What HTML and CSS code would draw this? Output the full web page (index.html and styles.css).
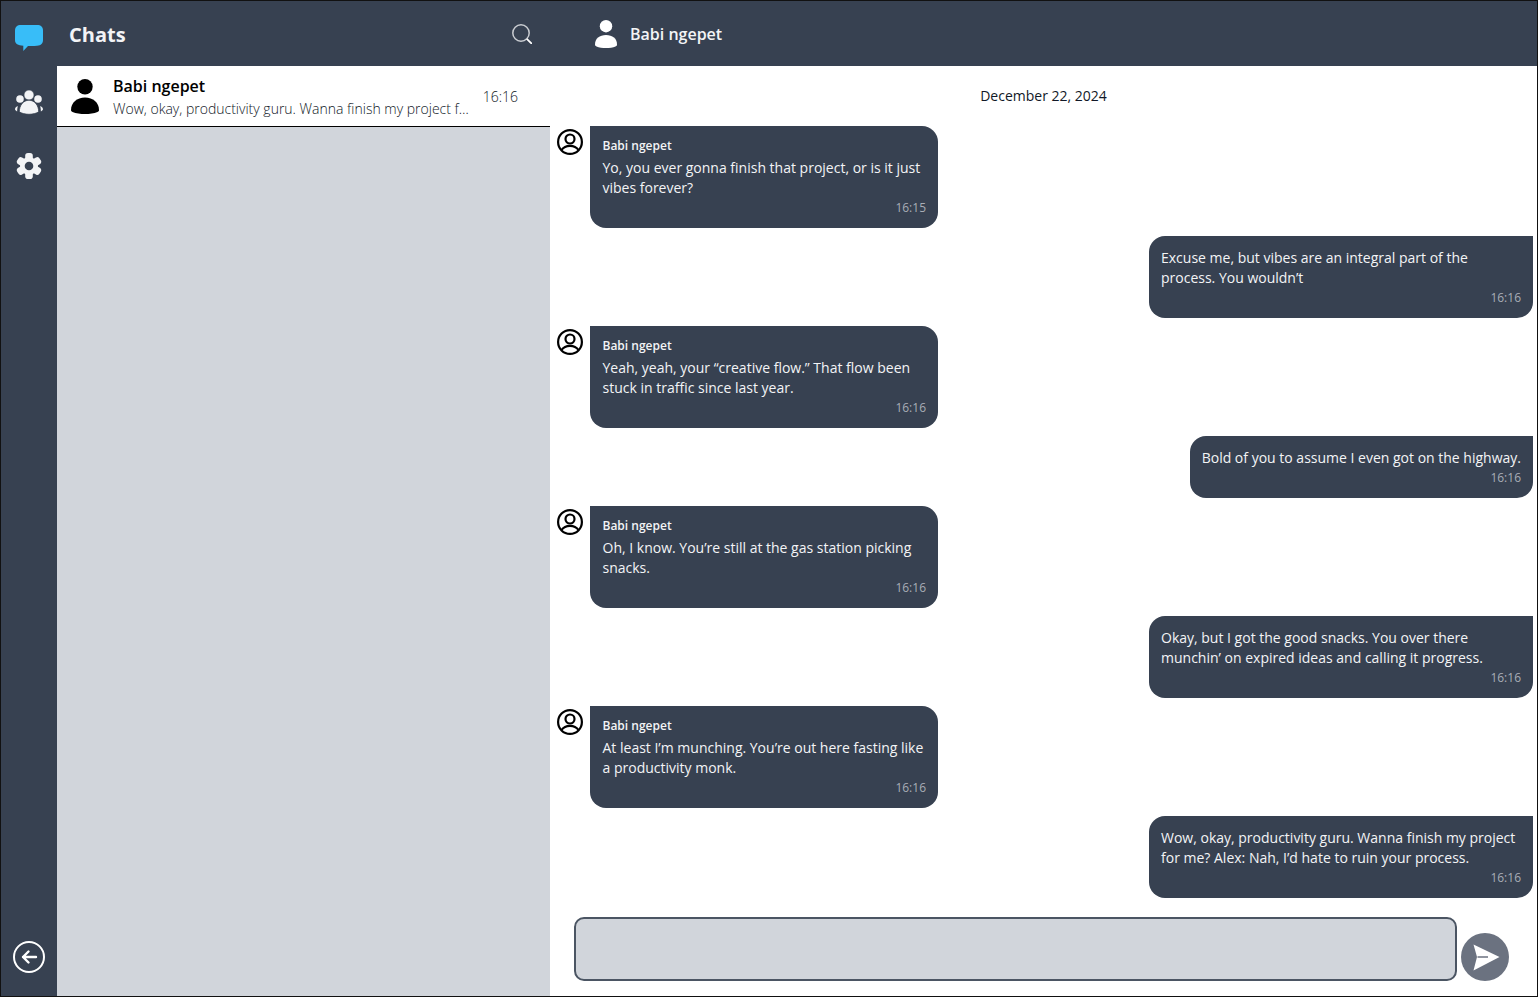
FILE: index.html
```html
<!DOCTYPE html>
<html lang="en">
<head>
  <meta charset="UTF-8">
  <meta name="viewport" content="width=device-width, initial-scale=1.0">
  <title>Chats</title>
  <link rel="stylesheet" href="styles.css">
</head>
<body>
  <div class="app">

    <nav class="sidebar">
      <svg class="nav-icon nav-chat" viewBox="0 0 28 26">
        <path fill="#38bdf8" d="M6 0h16c4 0 6 2 6 5.500v9.500c0 3.500-2 5.500-6 5.800-3 .3-6 .2-9 .2l-4.700 5V20.700C3 20.500 0 19 0 15V5.500C0 2 2 0 6 0z"/>
      </svg>
      <svg class="nav-icon nav-users" viewBox="0 0 28 26" fill="#f3f4f6">
        <circle cx="5" cy="10" r="3.800"/>
        <circle cx="23" cy="10" r="3.800"/>
        <circle cx="14" cy="6" r="5" stroke="#374151" stroke-width=".6"/>
        <path stroke="#374151" stroke-width=".8" d="M4.300 22.800c0-6.500 4.200-11.600 9.700-11.600s9.700 5.100 9.700 11.600c-2 1.500-5.800 2.500-9.700 2.500s-7.700-1-9.700-2.500z"/>
        <path d="M0 20.500c0-1.500.7-2.800 2.800-3.500-.4 1.800-.7 3.500-.7 5.500C1 22 .3 21.300 0 20.500z"/>
        <path d="M28 20.500c0-1.500-.7-2.800-2.800-3.500.4 1.800.7 3.500.7 5.500 1.100-.5 1.800-1.200 2.100-2z"/>
      </svg>
      <svg class="nav-icon nav-gear" viewBox="0 0 26 26">
        <g fill="#f3f4f6">
          <rect x="9.200" y="0" width="7.600" height="26" rx="2.800"/>
          <rect x="9.200" y="0" width="7.600" height="26" rx="2.800" transform="rotate(60 13 13)"/>
          <rect x="9.200" y="0" width="7.600" height="26" rx="2.800" transform="rotate(120 13 13)"/>
          <circle cx="13" cy="13" r="9"/>
        </g>
        <circle cx="13" cy="13" r="4.300" fill="#374151"/>
      </svg>
      <svg class="nav-icon nav-back" viewBox="0 0 32 32" fill="none" stroke="#fff" stroke-width="2" stroke-linecap="round" stroke-linejoin="round">
        <circle cx="16" cy="16" r="15"/>
        <path stroke-width="2.400" d="M23 16H10M15.500 10.500L10 16l5.500 5.500"/>
      </svg>
    </nav>

    <section class="list-panel">
      <header class="list-header">
        <h1>Chats</h1>
        <svg class="search-icon" viewBox="0 0 20 20" fill="none">
          <circle cx="9" cy="9" r="8.200" stroke="#c9ccd1" stroke-width="1.500"/>
          <path d="M14.800 14.800L20 20" stroke="#fff" stroke-width="1.800"/>
        </svg>
      </header>
      <div class="chat-item">
        <svg class="item-avatar" viewBox="0 0 28 35" fill="#000">
          <circle cx="14" cy="7.700" r="7.700"/>
          <path d="M0 31c0-7.500 6-12.500 14-12.500S28 23.500 28 31c0 1-.5 1.500-1.500 2-3.500 1.500-8 2-12.500 2s-9-.5-12.500-2C.5 32.500 0 32 0 31z"/>
        </svg>
        <div class="item-body">
          <div class="item-name">Babi ngepet</div>
          <div class="item-preview">Wow, okay, productivity guru. Wanna finish my project f…</div>
        </div>
        <div class="item-time">16:16</div>
      </div>
    </section>

    <main class="chat-panel">
      <header class="chat-header">
        <svg class="header-avatar" viewBox="0 0 22 28" fill="#fff">
          <circle cx="11" cy="6.200" r="6.200"/>
          <path d="M0 24.500c0-6 4.500-9.500 11-9.500s11 3.500 11 9.500c0 1-.5 1.500-1.500 2-2.500 1-6 1.500-9.500 1.500s-7-.5-9.500-1.500C.5 26 0 25.500 0 24.500z"/>
        </svg>
        <span>Babi ngepet</span>
      </header>

      <div class="messages">
        <div class="date">December 22, 2024</div>

        <div class="msg-in">
          <svg class="msg-avatar" viewBox="0 0 26 26" fill="none" stroke="#000" stroke-width="2.200">
            <circle cx="13" cy="13" r="11.900"/>
            <circle cx="13" cy="10" r="4.500"/>
            <path d="M4.500 21c2-3 5-4.200 8.500-4.200s6.500 1.200 8.500 4.200"/>
          </svg>
          <div class="bubble bubble-in">
            <div class="sender">Babi ngepet</div>
            <div class="text">Yo, you ever gonna finish that project, or is it just vibes forever?</div>
            <div class="time">16:15</div>
          </div>
        </div>

        <div class="bubble bubble-out">
          <div class="text">Excuse me, but vibes are an integral part of the process. You wouldn’t</div>
          <div class="time">16:16</div>
        </div>

        <div class="msg-in">
          <svg class="msg-avatar" viewBox="0 0 26 26" fill="none" stroke="#000" stroke-width="2.200">
            <circle cx="13" cy="13" r="11.900"/>
            <circle cx="13" cy="10" r="4.500"/>
            <path d="M4.500 21c2-3 5-4.200 8.500-4.200s6.500 1.200 8.500 4.200"/>
          </svg>
          <div class="bubble bubble-in">
            <div class="sender">Babi ngepet</div>
            <div class="text">Yeah, yeah, your “creative flow.” That flow been stuck in traffic since last year.</div>
            <div class="time">16:16</div>
          </div>
        </div>

        <div class="bubble bubble-out">
          <div class="text">Bold of you to assume I even got on the highway.</div>
          <div class="time">16:16</div>
        </div>

        <div class="msg-in">
          <svg class="msg-avatar" viewBox="0 0 26 26" fill="none" stroke="#000" stroke-width="2.200">
            <circle cx="13" cy="13" r="11.900"/>
            <circle cx="13" cy="10" r="4.500"/>
            <path d="M4.500 21c2-3 5-4.200 8.500-4.200s6.500 1.200 8.500 4.200"/>
          </svg>
          <div class="bubble bubble-in">
            <div class="sender">Babi ngepet</div>
            <div class="text">Oh, I know. You’re still at the gas station picking snacks.</div>
            <div class="time">16:16</div>
          </div>
        </div>

        <div class="bubble bubble-out">
          <div class="text">Okay, but I got the good snacks. You over there munchin’ on expired ideas and calling it progress.</div>
          <div class="time">16:16</div>
        </div>

        <div class="msg-in">
          <svg class="msg-avatar" viewBox="0 0 26 26" fill="none" stroke="#000" stroke-width="2.200">
            <circle cx="13" cy="13" r="11.900"/>
            <circle cx="13" cy="10" r="4.500"/>
            <path d="M4.500 21c2-3 5-4.200 8.500-4.200s6.500 1.200 8.500 4.200"/>
          </svg>
          <div class="bubble bubble-in">
            <div class="sender">Babi ngepet</div>
            <div class="text">At least I’m munching. You’re out here fasting like a productivity monk.</div>
            <div class="time">16:16</div>
          </div>
        </div>

        <div class="bubble bubble-out">
          <div class="text">Wow, okay, productivity guru. Wanna finish my project for me? Alex: Nah, I’d hate to ruin your process.</div>
          <div class="time">16:16</div>
        </div>
      </div>

      <div class="composer">
        <textarea class="composer-input"></textarea>
        <button class="send-btn" type="button">
          <svg viewBox="0 0 48 48">
            <path fill="#fff" d="M12.500 11.500L38.500 24 12.500 37.500 16 24z"/>
            <path d="M16.500 24H27" stroke="#6b7280" stroke-width="1.500"/>
          </svg>
        </button>
      </div>
    </main>

  </div>
</body>
</html>
```

FILE: styles.css
```css
* {
  box-sizing: border-box;
}

body {
  margin: 0;
  font-family: "Open Sans", sans-serif;
  background-color: #fff;
}

.app {
  display: flex;
  height: 997px;
  border: 1px solid #111;
  overflow: hidden;
}

.sidebar {
  width: 56px;
  flex-shrink: 0;
  display: flex;
  flex-direction: column;
  align-items: center;
  background-color: #374151;
}

.nav-icon {
  display: block;
}

.nav-chat {
  width: 28px;
  height: 26px;
  margin-top: 24px;
}

.nav-users {
  width: 28px;
  height: 26px;
  margin-top: 38px;
}

.nav-gear {
  width: 26px;
  height: 26px;
  margin-top: 38px;
}

.nav-back {
  width: 32px;
  height: 32px;
  margin-top: auto;
  margin-bottom: 23px;
}

.list-panel {
  width: 493px;
  flex-shrink: 0;
  display: flex;
  flex-direction: column;
  background-color: #d1d5db;
}

.list-header {
  height: 65px;
  display: flex;
  align-items: center;
  justify-content: space-between;
  padding: 2px 18px 0 12px;
  background-color: #374151;
}

.list-header h1 {
  margin: 0;
  font-size: 20px;
  font-weight: 700;
  color: #f3f4f6;
}

.search-icon {
  width: 20px;
  height: 20px;
  margin-bottom: 2px;
}

.chat-item {
  height: 61px;
  display: flex;
  align-items: center;
  padding: 0 32px 0 14px;
  background-color: #fff;
  border-bottom: 1px solid #000;
}

.item-avatar {
  width: 28px;
  height: 35px;
  flex-shrink: 0;
}

.item-body {
  flex: 1;
  min-width: 0;
  margin: 2px 14px 0 14px;
}

.item-name {
  font-size: 16px;
  line-height: 23px;
  font-weight: 600;
  color: #000;
}

.item-preview {
  margin-top: -1px;
  font-size: 14px;
  line-height: 23px;
  font-weight: 300;
  color: #111827;
  white-space: nowrap;
}

.item-time {
  font-size: 14px;
  font-weight: 300;
  color: #111827;
}

.chat-panel {
  flex: 1;
  min-width: 0;
  display: flex;
  flex-direction: column;
}

.chat-header {
  height: 65px;
  flex-shrink: 0;
  display: flex;
  align-items: center;
  gap: 13px;
  padding-left: 45px;
  background-color: #374151;
  font-size: 16px;
  font-weight: 600;
  color: #f3f4f6;
}

.header-avatar {
  width: 22px;
  height: 28px;
}

.messages {
  flex: 1;
  display: flex;
  flex-direction: column;
  gap: 8px;
  padding: 20px 4px 0 7px;
  overflow: hidden;
}

.date {
  height: 32px;
  padding-right: 3px;
  font-size: 14px;
  line-height: 20px;
  text-align: center;
  color: #111827;
}

.msg-in {
  display: flex;
  align-items: flex-start;
  gap: 7px;
}

.msg-avatar {
  width: 26px;
  height: 26px;
  flex-shrink: 0;
  margin-top: 3px;
}

.bubble {
  padding: 12px;
  background-color: #374151;
  color: #f3f4f6;
}

.bubble-in {
  width: 348px;
  padding-left: 12.5px;
  border-radius: 0 16px 16px 16px;
}

.bubble-out {
  align-self: flex-end;
  max-width: 384px;
  border-radius: 16px 0 16px 16px;
}

.sender {
  font-size: 12px;
  line-height: 16px;
  font-weight: 600;
  margin-bottom: 4px;
}

.text {
  font-size: 14px;
  line-height: 20px;
}

.time {
  font-size: 12px;
  line-height: 16px;
  margin-top: 2px;
  text-align: right;
  color: #a8adb6;
}

.composer {
  flex-shrink: 0;
  display: flex;
  align-items: center;
  gap: 4px;
  padding: 0 0 15px 24px;
}

.composer-input {
  width: 883px;
  height: 64px;
  border: 2px solid #4b5563;
  border-radius: 10px;
  background-color: #d1d5db;
  resize: none;
}

.send-btn {
  width: 48px;
  height: 48px;
  padding: 0;
  border: 0;
  border-radius: 50%;
  background-color: #6b7280;
  margin-top: 16px;
}

.send-btn svg {
  display: block;
  width: 48px;
  height: 48px;
}
```
